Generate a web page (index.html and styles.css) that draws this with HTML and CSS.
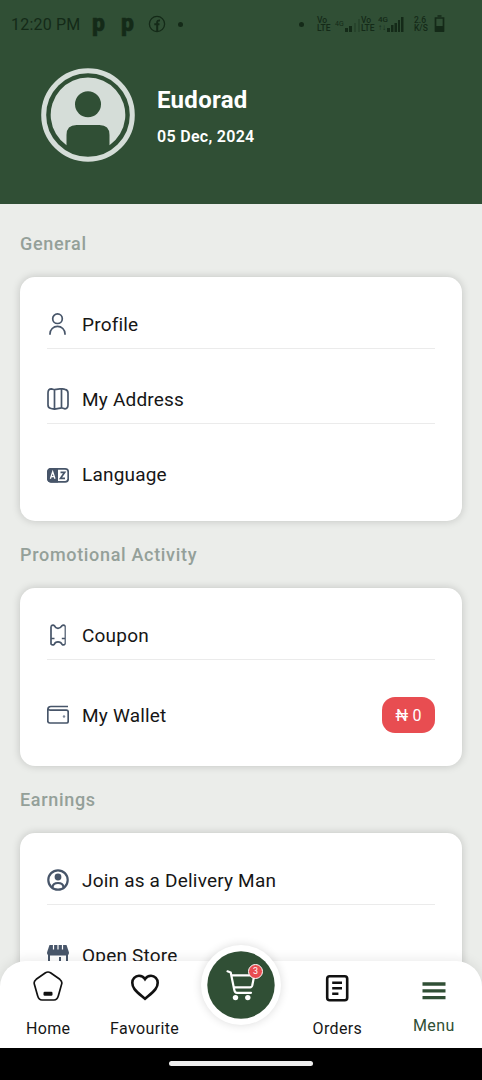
FILE: index.html
```html
<!DOCTYPE html>
<html lang="en">
<head>
<meta charset="utf-8">
<title>Menu</title>
<link rel="stylesheet" href="styles.css">
</head>
<body>
<div class="screen">
  <header class="header">
    <div class="status">
      <span class="clock">12:20 PM</span>
      <b class="app-p">p</b>
      <b class="app-p second">p</b>
      <svg class="fb" width="18" height="18" viewBox="0 0 18 18"><circle cx="9" cy="9" r="7.6" fill="none" stroke="currentColor" stroke-width="1.3"/><path d="M9.2 16V7.3Q9.2 5.2 12 5.4M6.3 9.2h5.2" fill="none" stroke="currentColor" stroke-width="2"/></svg>
      <i class="dot"></i>
      <i class="dot right-dot"></i>
      <span class="tiny volte">Vo<br>LTE</span>
      <span class="net">4G</span>
      <svg class="bars" width="21" height="16" viewBox="0 0 21 16"><path d="M1 12h3v4H1zM5 10h3v6H5z" fill="currentColor"/><path d="M10 7h2v9h-2zM14 3h2v13h-2z" fill="currentColor" opacity=".3"/></svg>
      <span class="tiny volte two">Vo<br>LTE</span>
      <span class="tiny fourg">4G<br>↑↓</span>
      <svg class="bars-full" width="17" height="16" viewBox="0 0 17 16"><path d="M0 12h3v4H0zM4 9h2.5v7H4zM7.5 7H10v9H7.5zM11 4h2v12h-2zM14 1h2.500v15H14z" fill="currentColor"/></svg>
      <span class="tiny speed">2.6<br>K/S</span>
      <svg class="battery" width="11" height="18" viewBox="0 0 11 18"><path d="M3.500 1h4M1.500 3h8v13h-8z" fill="none" stroke="currentColor" stroke-width="1.700"/><path d="M1 11h9v6H1z" fill="currentColor"/></svg>
    </div>
    <div class="user">
      <svg class="avatar" width="94" height="94" viewBox="0 0 94 94">
        <circle cx="47" cy="47" r="44.300" fill="none" stroke="#d5ddd8" stroke-width="5"/>
        <path d="M25.500 77.200A37.300 37.300 0 1 1 68.500 77.200V67Q68.500 57 58.500 57H35.500Q25.500 57 25.500 67Z" fill="#d5ddd8"/>
        <circle cx="47" cy="36.200" r="13" fill="#304f35"/>
      </svg>
      <div class="user-text">
        <div class="name">Eudorad</div>
        <div class="date">05 Dec, 2024</div>
      </div>
    </div>
  </header>
  <main class="content">
    <h2 class="title first">General</h2>
    <section class="card">
      <div class="row line">
        <svg class="icon" viewBox="0 0 22 22"><circle cx="10.500" cy="5.700" r="4.800"/><path d="M3 21.800v-1a7.500 7.500 0 0 1 15 0v1"/></svg>
        <span>Profile</span>
      </div>
      <div class="row line">
        <svg class="icon" viewBox="0 0 22 22"><path d="M7.500 1.700 4.500.9Q1 1 1 5v12q0 3 3 3.500l3.500.7 7-1.400 3.500 1q3-.2 3-4V5q0-3.200-3-3.700l-3.500-.7ZM7.500 1.700v19.500M14.500.8V20"/></svg>
        <span>My Address</span>
      </div>
      <div class="row">
        <svg class="icon" viewBox="0 0 22 22"><rect x=".8" y="4.800" width="20.400" height="13" rx="3"/><path d="M4 4h7v14.500H4q-3.500 0-3.500-3.500V7.500Q.5 4 4 4Z" fill="#475569" stroke="none"/><path d="m3.400 14.800 2.300-7L8 14.800M4.200 12.700h3" stroke="#fff" stroke-width="1.300"/><path d="M13.500 8.300h4.200l-4.200 6h4.500" stroke-width="1.700"/></svg>
        <span>Language</span>
      </div>
    </section>
    <h2 class="title">Promotional Activity</h2>
    <section class="card">
      <div class="row line">
        <svg class="icon" viewBox="0 0 22 22"><path d="M18.200 2v18" stroke-width="1.200"/><path d="M4 2.200Q6 .3 7.500 1.800 8.500 4.300 11 4.300t3.800-2.500Q16.500.2 18.200 2M4 2.200V20q1.500 1.700 3.300.3Q8 17.800 11 17.800t4 2.500q1.500 1.400 3.200-.3M4.500 14.500h3M14.800 14.500H18"/></svg>
        <span>Coupon</span>
      </div>
      <div class="row tall">
        <svg class="icon" viewBox="0 0 22 22"><path d="M21 2.500H4Q.8 2.500.8 6v11q0 2 2 2h16.700q1.700 0 1.700-1.700V7.800q0-1.700-1.700-1.700H3.500Q1 6.100 1.500 4.500"/><circle cx="17" cy="12.500" r="1.200" fill="#7c8799" stroke="none"/></svg>
        <span>My Wallet</span>
        <span class="balance">₦ 0</span>
      </div>
    </section>
    <h2 class="title last">Earnings</h2>
    <section class="card">
      <div class="row line">
        <svg class="icon" viewBox="0 0 22 22"><circle cx="11" cy="11" r="9.700" stroke-width="2.200"/><circle cx="11" cy="8" r="3.400" fill="#475569" stroke="none"/><path d="M5.500 18q.5-4 5.500-4t5.500 4" stroke-width="2.200"/></svg>
        <span>Join as a Delivery Man</span>
      </div>
      <div class="row">
        <svg class="icon" viewBox="0 0 22 22"><path d="M2.500 0h17L22 7.500q0 3-2.700 3H2.700Q0 10.500 0 7.500Z" fill="#475569" stroke="none"/><path d="M6.500 0v4.500M11 0v4.500M15.500 0v4.500" stroke="#fff" stroke-width="1.200"/><path d="M2 10v11h18V10M13 21v-9" stroke-width="2"/></svg>
        <span>Open Store</span>
      </div>
    </section>
  </main>
  <div class="bottom">
    <nav class="nav">
      <a class="tab"><svg width="32" height="32" viewBox="0 0 32 32"><path d="M13.500 1.800q2.500-1.600 5 0l9.300 6.500q2.600 2 1.900 4.600l-3.400 12Q25.300 29 22 29H10q-3.300 0-4.300-4.100L2.300 12.900q-.7-2.600 1.900-4.600Z" fill="none" stroke="#111" stroke-width="1.700"/><rect x="11.500" y="20.700" width="9" height="4" rx="1.200" fill="#111"/></svg><span>Home</span></a>
      <a class="tab"><svg width="32" height="32" viewBox="0 0 32 32"><path d="M16 27.800 13 25.300C6 19.500 3.300 16.500 3.300 11.700A6.800 6.800 0 0 1 10 4.700c2.500 0 4.700 1.200 6 3.300 1.300-2.100 3.500-3.300 6-3.300a6.800 6.800 0 0 1 6.700 7C28.700 16.500 26 19.500 19 25.300Z" fill="none" stroke="#111" stroke-width="2.600"/></svg><span>Favourite</span></a>
      <span class="tab"></span>
      <a class="tab"><svg width="32" height="32" viewBox="0 0 32 32"><rect x="6.200" y="5.200" width="20" height="24" rx="2.500" fill="none" stroke="#111" stroke-width="2.600"/><path d="M11.200 11.800h9.800M11.200 17.300h9.800M11.200 22.800h6.200" stroke="#111" stroke-width="2.400"/></svg><span>Orders</span></a>
      <a class="tab active"><svg width="32" height="32" viewBox="0 0 32 32"><path d="M4.500 13h23M4.500 19.800h23M4.500 26.600h23" stroke="#304f35" stroke-width="3.300"/></svg><span>Menu</span></a>
    </nav>
    <div class="cart">
      <svg width="80" height="80" viewBox="0 0 80 80"><circle cx="40" cy="40" r="33.700" fill="#304f35"/><path d="m26.500 26.300 3.200 1.200 3.600 17.500M30.500 30.300h22.800l-2 10q-.5 2-2.200 2H33M33.300 45q.5 2.800 2.700 2.800h14" fill="none" stroke="#fff" stroke-width="2.200" stroke-linecap="round" stroke-linejoin="round"/><circle cx="34.500" cy="52.600" r="2.700" fill="#fff"/><circle cx="46.800" cy="52.600" r="2.700" fill="#fff"/></svg>
      <span class="badge">3</span>
    </div>
    <div class="system"><i></i></div>
  </div>
</div>
</body>
</html>
```
FILE: styles.css
```css
* { box-sizing: border-box; }
body { margin: 0; font-family: Roboto, "Noto Sans", sans-serif; background: #ebedea; }
.screen { position: relative; width: 482px; height: 1080px; overflow: hidden; background: #ebedea; }
.header { height: 204px; background: #304f35; color: #fff; }
.status { display: flex; align-items: center; height: 48px; padding-left: 11px; color: #142a18; }
.clock { width: 81px; font-size: 16px; letter-spacing: .2px; white-space: nowrap; }
.app-p { width: 29px; height: 24px; font: 900 23px/23px Roboto, sans-serif; -webkit-text-stroke: .4px currentColor; }
.app-p.second { width: 27px; }
.fb { flex: none; }
.dot { width: 5px; height: 5px; border-radius: 50%; background: currentColor; margin-left: 12px; }
.right-dot { margin-left: 116px; }
.tiny { font-size: 8.500px; line-height: 8px; font-weight: 500; flex: none; }
.volte { width: 18px; margin-left: 13px; }
.net { font-size: 7px; width: 9px; }
.volte.two { width: 15px; margin-left: -4px; }
.fourg { width: 11px; margin-left: 2px; font-size: 8px; }
.bars-full { margin-left: -2px; }
.speed { width: 14px; margin-left: 10px; }
.battery { margin-left: 6px; }
.status svg { flex: none; }
.user { display: flex; align-items: center; padding: 20px 0 0 41px; gap: 22px; }
.avatar { flex: none; }
.name { margin-top: 3px; font-size: 24px; line-height: 30px; font-weight: 700; letter-spacing: .3px; }
.date { margin-top: 11px; font-size: 16px; line-height: 22px; font-weight: 600; letter-spacing: .3px; }
.content { padding: 0 20px; }
.title { margin: 23px 0 22px; font-size: 18px; line-height: 22px; font-weight: 500; letter-spacing: .68px; color: #94a099; }
.title.first { margin-top: 29px; }
.title.last { margin-top: 23px; }
.card { padding: 23px 27px 22px; background: #fff; border-radius: 15px; box-shadow: 0 0 8px rgba(0, 0, 0, .18); }
.row { display: flex; align-items: center; height: 49px; gap: 13px; font-size: 19px; letter-spacing: .2px; color: #161616; }
.row + .row { margin-top: 26px; }
.row.line { border-bottom: 1px solid #ebebeb; }
.row.tall { height: 58px; }
.icon { width: 22px; height: 22px; flex: none; fill: none; stroke: #475569; stroke-width: 1.700; }
.balance { margin-left: auto; width: 53px; height: 36px; border-radius: 13px; background: #e84d51; color: #fff; font-size: 16px; line-height: 37px; text-align: center; }
.bottom { position: absolute; left: 0; right: 0; bottom: 0; height: 119px; }
.nav { display: flex; height: 87px; background: #fff; border-radius: 26px 26px 0 0; box-shadow: 0 -2px 12px rgba(0, 0, 0, .08); }
.tab { flex: 1 1 0; display: flex; flex-direction: column; align-items: center; padding-top: 10px; font-size: 16px; letter-spacing: .37px; color: #161616; }
.tab span { margin-top: 15px; line-height: 22px; }
.active { color: #304f35; }
.active span { margin-top: 12px; }
.cart { position: absolute; left: 201px; top: -16px; width: 80px; height: 80px; border-radius: 50%; background: #fff; box-shadow: 0 0 10px rgba(0, 0, 0, .14); }
.badge { position: absolute; left: 47px; top: 19px; width: 15px; height: 15px; border: 1px solid #fff; border-radius: 50%; background: #e84d51; color: #fff; font-size: 9px; line-height: 13px; text-align: center; }
.system { height: 32px; background: #000; display: flex; justify-content: center; padding-top: 13px; }
.system i { width: 144px; height: 5px; border-radius: 3px; background: #eee; }
```
